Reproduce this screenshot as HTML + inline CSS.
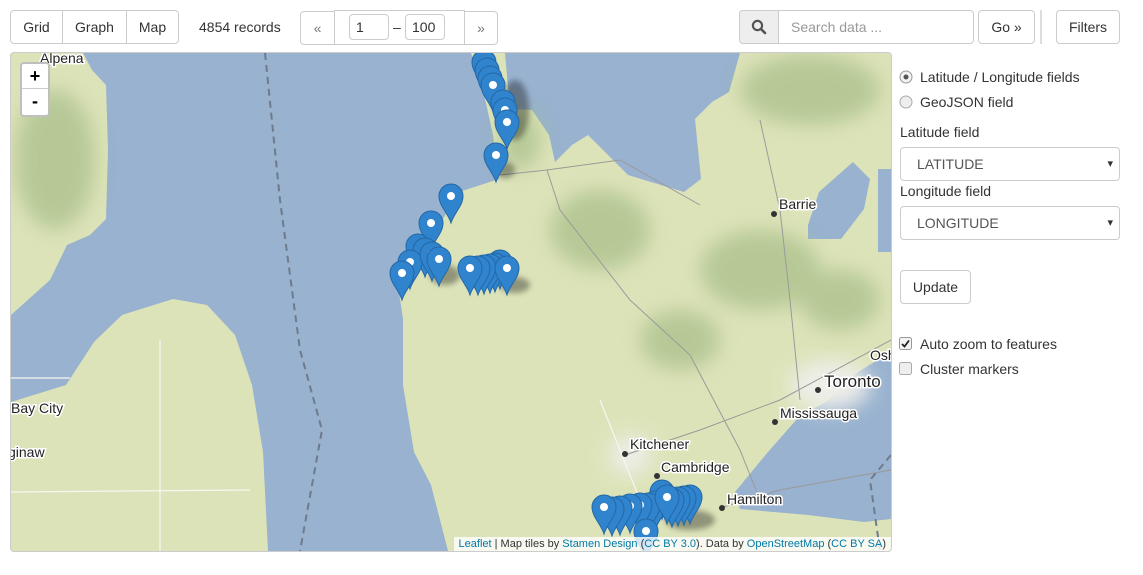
<!DOCTYPE html>
<html><head><meta charset="utf-8"><style>
*{box-sizing:border-box}
body{margin:0;width:1143px;height:575px;background:#fff;font-family:"Liberation Sans",sans-serif;font-size:14px;color:#333;position:relative;overflow:hidden}
.b{position:absolute;border:1px solid #ccc;background:#fff;height:34px;line-height:32px;text-align:center;color:#333}
.t{position:absolute}
.inp{position:absolute;border:1px solid #ccc;border-radius:4px;height:26px;line-height:24px;padding-left:6px;background:#fff}
.sel{position:absolute;left:900px;width:220px;height:34px;border:1px solid #ccc;border-radius:4px;line-height:32px;padding-left:16px;color:#555}
.sel:after{content:"▾";position:absolute;right:6px;font-size:11px;color:#333}
.zb{width:26px;height:25px;background:#fff;text-align:center;font:bold 18px/25px "Liberation Sans",sans-serif;color:#000}
</style></head><body>
<div class="b" style="left:10px;top:10px;width:53px;border-radius:4px 0 0 4px">Grid</div>
<div class="b" style="left:62px;top:10px;width:65px">Graph</div>
<div class="b" style="left:126px;top:10px;width:53px;border-radius:0 4px 4px 0">Map</div>
<div class="t" style="left:199px;top:19px">4854 records</div>
<div class="b" style="left:300px;top:11px;width:35px;border-radius:4px 0 0 4px;color:#777">«</div>
<div class="b" style="left:334px;top:10px;width:131px;height:35px"></div>
<div class="inp" style="left:349px;top:14px;width:40px">1</div>
<div class="t" style="left:393px;top:19px">–</div>
<div class="inp" style="left:405px;top:14px;width:40px">100</div>
<div class="b" style="left:464px;top:11px;width:34px;border-radius:0 4px 4px 0;color:#777">»</div>
<div class="b" style="left:739px;top:10px;width:40px;border-radius:4px 0 0 4px;background:#eee">
<svg width="16" height="16" viewBox="0 0 16 16" style="margin-top:8px"><circle cx="6.5" cy="6.5" r="4.6" fill="none" stroke="#555" stroke-width="2.2"/><path d="M10 10L14 14" stroke="#555" stroke-width="2.6" stroke-linecap="round"/></svg></div>
<div class="b" style="left:778px;top:10px;width:196px;border-radius:0 4px 4px 0;text-align:left;padding-left:12px;color:#999">Search data ...</div>
<div class="b" style="left:978px;top:10px;width:57px;border-radius:4px">Go »</div>
<div style="position:absolute;left:1040px;top:10px;width:2px;height:34px;background:#ddd"></div>
<div class="b" style="left:1056px;top:10px;width:64px;border-radius:4px">Filters</div>

<div style="position:absolute;left:10px;top:52px;width:882px;height:500px;border:1px solid #ccc;border-radius:4px;overflow:hidden;background:#98b2cf">
<svg width="880" height="498" viewBox="11 53 880 498" style="position:absolute;left:0;top:0">
<defs>
<filter id="bl"><feGaussianBlur stdDeviation="10"/></filter>
<filter id="sh"><feGaussianBlur stdDeviation="3"/></filter>
<g id="p"><path d="M0,27 C-3,17 -12,10 -12,0 A12,12 0 1 1 12,0 C12,10 3,17 0,27Z" fill="#2f84cd" stroke="#2467a6" stroke-width="1"/><circle r="4" fill="#fff"/></g>
</defs>
<g fill="#dde3b9">
<path d="M11,53 L83,53 L92,70 L106,85 L108,150 L106,219 L90,235 L67,245 L50,280 L11,315Z"/>
<path d="M11,402 L66,385 L94,342 L122,315 L173,299 L207,305 L235,335 L252,385 L263,452 L268,551 L11,551Z"/>
<path d="M471,53 L482,85 L493,135 L499,179 L459,192 L443,219 L414,252 L398,285 L403,319 L403,385 L414,452 L431,485 L448,551 L891,551 L891,519 L864,522 L808,515 L740,509 L735,492 L768,452 L797,419 L830,399 L858,372 L891,352 L891,252 L878,252 L878,169 L891,169 L891,53 L740,53 L729,92 L712,102 L695,119 L701,179 L684,192 L628,175 L605,152 L588,135 L572,145 L555,162 L549,135 L532,110 L510,109 L505,53Z"/>
</g>
<path d="M808,225 L819,192 L853,162 L870,179 L864,209 L841,239 L808,239Z" fill="#98b2cf"/>
<g fill="#a9c08a" opacity="0.75" filter="url(#bl)">
<ellipse cx="55" cy="160" rx="40" ry="70"/>
<ellipse cx="810" cy="90" rx="70" ry="35"/>
<ellipse cx="760" cy="270" rx="60" ry="40"/>
<ellipse cx="600" cy="230" rx="50" ry="40"/>
<ellipse cx="840" cy="300" rx="40" ry="30"/>
<ellipse cx="520" cy="140" rx="20" ry="30"/>
<ellipse cx="680" cy="340" rx="40" ry="30"/>
</g>
<g fill="#eeeeea" filter="url(#bl)"><ellipse cx="830" cy="385" rx="40" ry="25"/><ellipse cx="630" cy="455" rx="20" ry="20"/></g>
<g stroke="#9a9a9a" stroke-width="1" fill="none">
<path d="M500,175 L547,170 L560,210 L630,300 L690,355 L740,450 L760,500"/>
<path d="M547,170 L620,160 L700,205"/>
<path d="M760,120 L780,210 L790,300 L800,400"/>
<path d="M625,455 L700,430 L780,400 L891,340"/>
<path d="M720,508 L780,490 L891,470"/>
</g>
<g stroke="#f7f7f2" stroke-width="1.2" fill="none">
<path d="M11,378 L70,378"/><path d="M11,492 L250,490"/><path d="M160,340 L160,551"/><path d="M600,400 L640,500"/>
</g>
<path d="M265,53 L280,200 L300,350 L322,430 L300,551" stroke="#707a8a" stroke-width="2" stroke-dasharray="7,5" fill="none"/>
<path d="M891,455 L870,480 L880,551" stroke="#707a8a" stroke-width="2" stroke-dasharray="7,5" fill="none"/>
<g fill="#333"><circle cx="774" cy="214" r="3"/><circle cx="818" cy="390" r="3"/><circle cx="775" cy="422" r="3"/><circle cx="625" cy="454" r="3"/><circle cx="657" cy="476" r="3"/><circle cx="722" cy="508" r="3"/></g>
<g font-family="Liberation Sans,sans-serif" fill="#222" stroke="#fff" stroke-width="3" paint-order="stroke" font-size="14">
<text x="40" y="63">Alpena</text><text x="779" y="209">Barrie</text><text x="824" y="387" font-size="17">Toronto</text>
<text x="780" y="418">Mississauga</text><text x="630" y="449">Kitchener</text><text x="661" y="472">Cambridge</text>
<text x="727" y="504">Hamilton</text><text x="11" y="413">Bay City</text><text x="8" y="457">ginaw</text><text x="870" y="360">Osh</text>
</g>
<g fill="#000" opacity="0.35" filter="url(#sh)">
<ellipse cx="515" cy="110" rx="14" ry="30"/><ellipse cx="505" cy="170" rx="10" ry="8"/><ellipse cx="445" cy="275" rx="15" ry="10"/><ellipse cx="515" cy="285" rx="15" ry="8"/><ellipse cx="690" cy="520" rx="25" ry="10"/>
</g>
<use href="#p" x="484" y="62"/><use href="#p" x="487" y="70"/><use href="#p" x="490" y="78"/><use href="#p" x="493" y="85"/>
<use href="#p" x="503" y="102"/><use href="#p" x="505" y="110"/><use href="#p" x="507" y="122"/><use href="#p" x="496" y="155"/>
<use href="#p" x="451" y="196"/><use href="#p" x="431" y="223"/><use href="#p" x="418" y="246"/><use href="#p" x="425" y="250"/>
<use href="#p" x="410" y="262"/><use href="#p" x="432" y="254"/><use href="#p" x="439" y="259"/><use href="#p" x="402" y="273"/>
<use href="#p" x="500" y="262"/><use href="#p" x="495" y="265"/><use href="#p" x="490" y="266"/><use href="#p" x="484" y="267"/><use href="#p" x="478" y="268"/><use href="#p" x="470" y="268"/><use href="#p" x="507" y="268"/>
<use href="#p" x="690" y="497"/><use href="#p" x="684" y="498"/><use href="#p" x="678" y="499"/><use href="#p" x="672" y="500"/><use href="#p" x="662" y="492"/>
<use href="#p" x="655" y="503"/><use href="#p" x="648" y="505"/><use href="#p" x="640" y="505"/><use href="#p" x="630" y="506"/><use href="#p" x="620" y="508"/><use href="#p" x="612" y="509"/><use href="#p" x="604" y="507"/>
<use href="#p" x="667" y="497"/><use href="#p" x="646" y="531"/>
</svg>
<div style="position:absolute;left:9px;top:9px;width:30px;height:55px;border:2px solid rgba(0,0,0,0.25);border-radius:4px;overflow:hidden;background:#fff">
<div class="zb" style="border-bottom:1px solid #ccc">+</div>
<div class="zb">-</div>
</div>
<div style="position:absolute;right:0;bottom:0;background:rgba(255,255,255,0.8);font-size:11px;padding:1px 5px;color:#333;white-space:nowrap"><span style="color:#0078a8">Leaflet</span> | Map tiles by <span style="color:#0078a8">Stamen Design</span> (<span style="color:#0078a8">CC BY 3.0</span>). Data by <span style="color:#0078a8">OpenStreetMap</span> (<span style="color:#0078a8">CC BY SA</span>)</div>
</div>

<svg style="position:absolute;left:899px;top:70px" width="14" height="14"><circle cx="7" cy="7" r="6" fill="#f3f3f3" stroke="#999"/><circle cx="7" cy="7" r="2.5" fill="#555"/></svg>
<div class="t" style="left:920px;top:69px">Latitude / Longitude fields</div>
<svg style="position:absolute;left:899px;top:95px" width="14" height="14"><circle cx="7" cy="7" r="6" fill="#eee" stroke="#aaa"/></svg>
<div class="t" style="left:920px;top:94px">GeoJSON field</div>
<div class="t" style="left:900px;top:124px">Latitude field</div>
<div class="sel" style="top:147px">LATITUDE</div>
<div class="t" style="left:900px;top:183px">Longitude field</div>
<div class="sel" style="top:206px">LONGITUDE</div>
<div class="b" style="left:900px;top:270px;width:71px;border-radius:4px">Update</div>
<svg style="position:absolute;left:899px;top:337px" width="14" height="14"><rect x="0.5" y="0.5" width="12" height="12" rx="2" fill="#f3f3f3" stroke="#999"/><path d="M3 7L5.5 9.5L10 3.5" stroke="#222" stroke-width="1.8" fill="none"/></svg>
<div class="t" style="left:920px;top:336px">Auto zoom to features</div>
<svg style="position:absolute;left:899px;top:362px" width="14" height="14"><rect x="0.5" y="0.5" width="12" height="12" rx="2" fill="#eee" stroke="#aaa"/></svg>
<div class="t" style="left:920px;top:361px">Cluster markers</div>
</body></html>
